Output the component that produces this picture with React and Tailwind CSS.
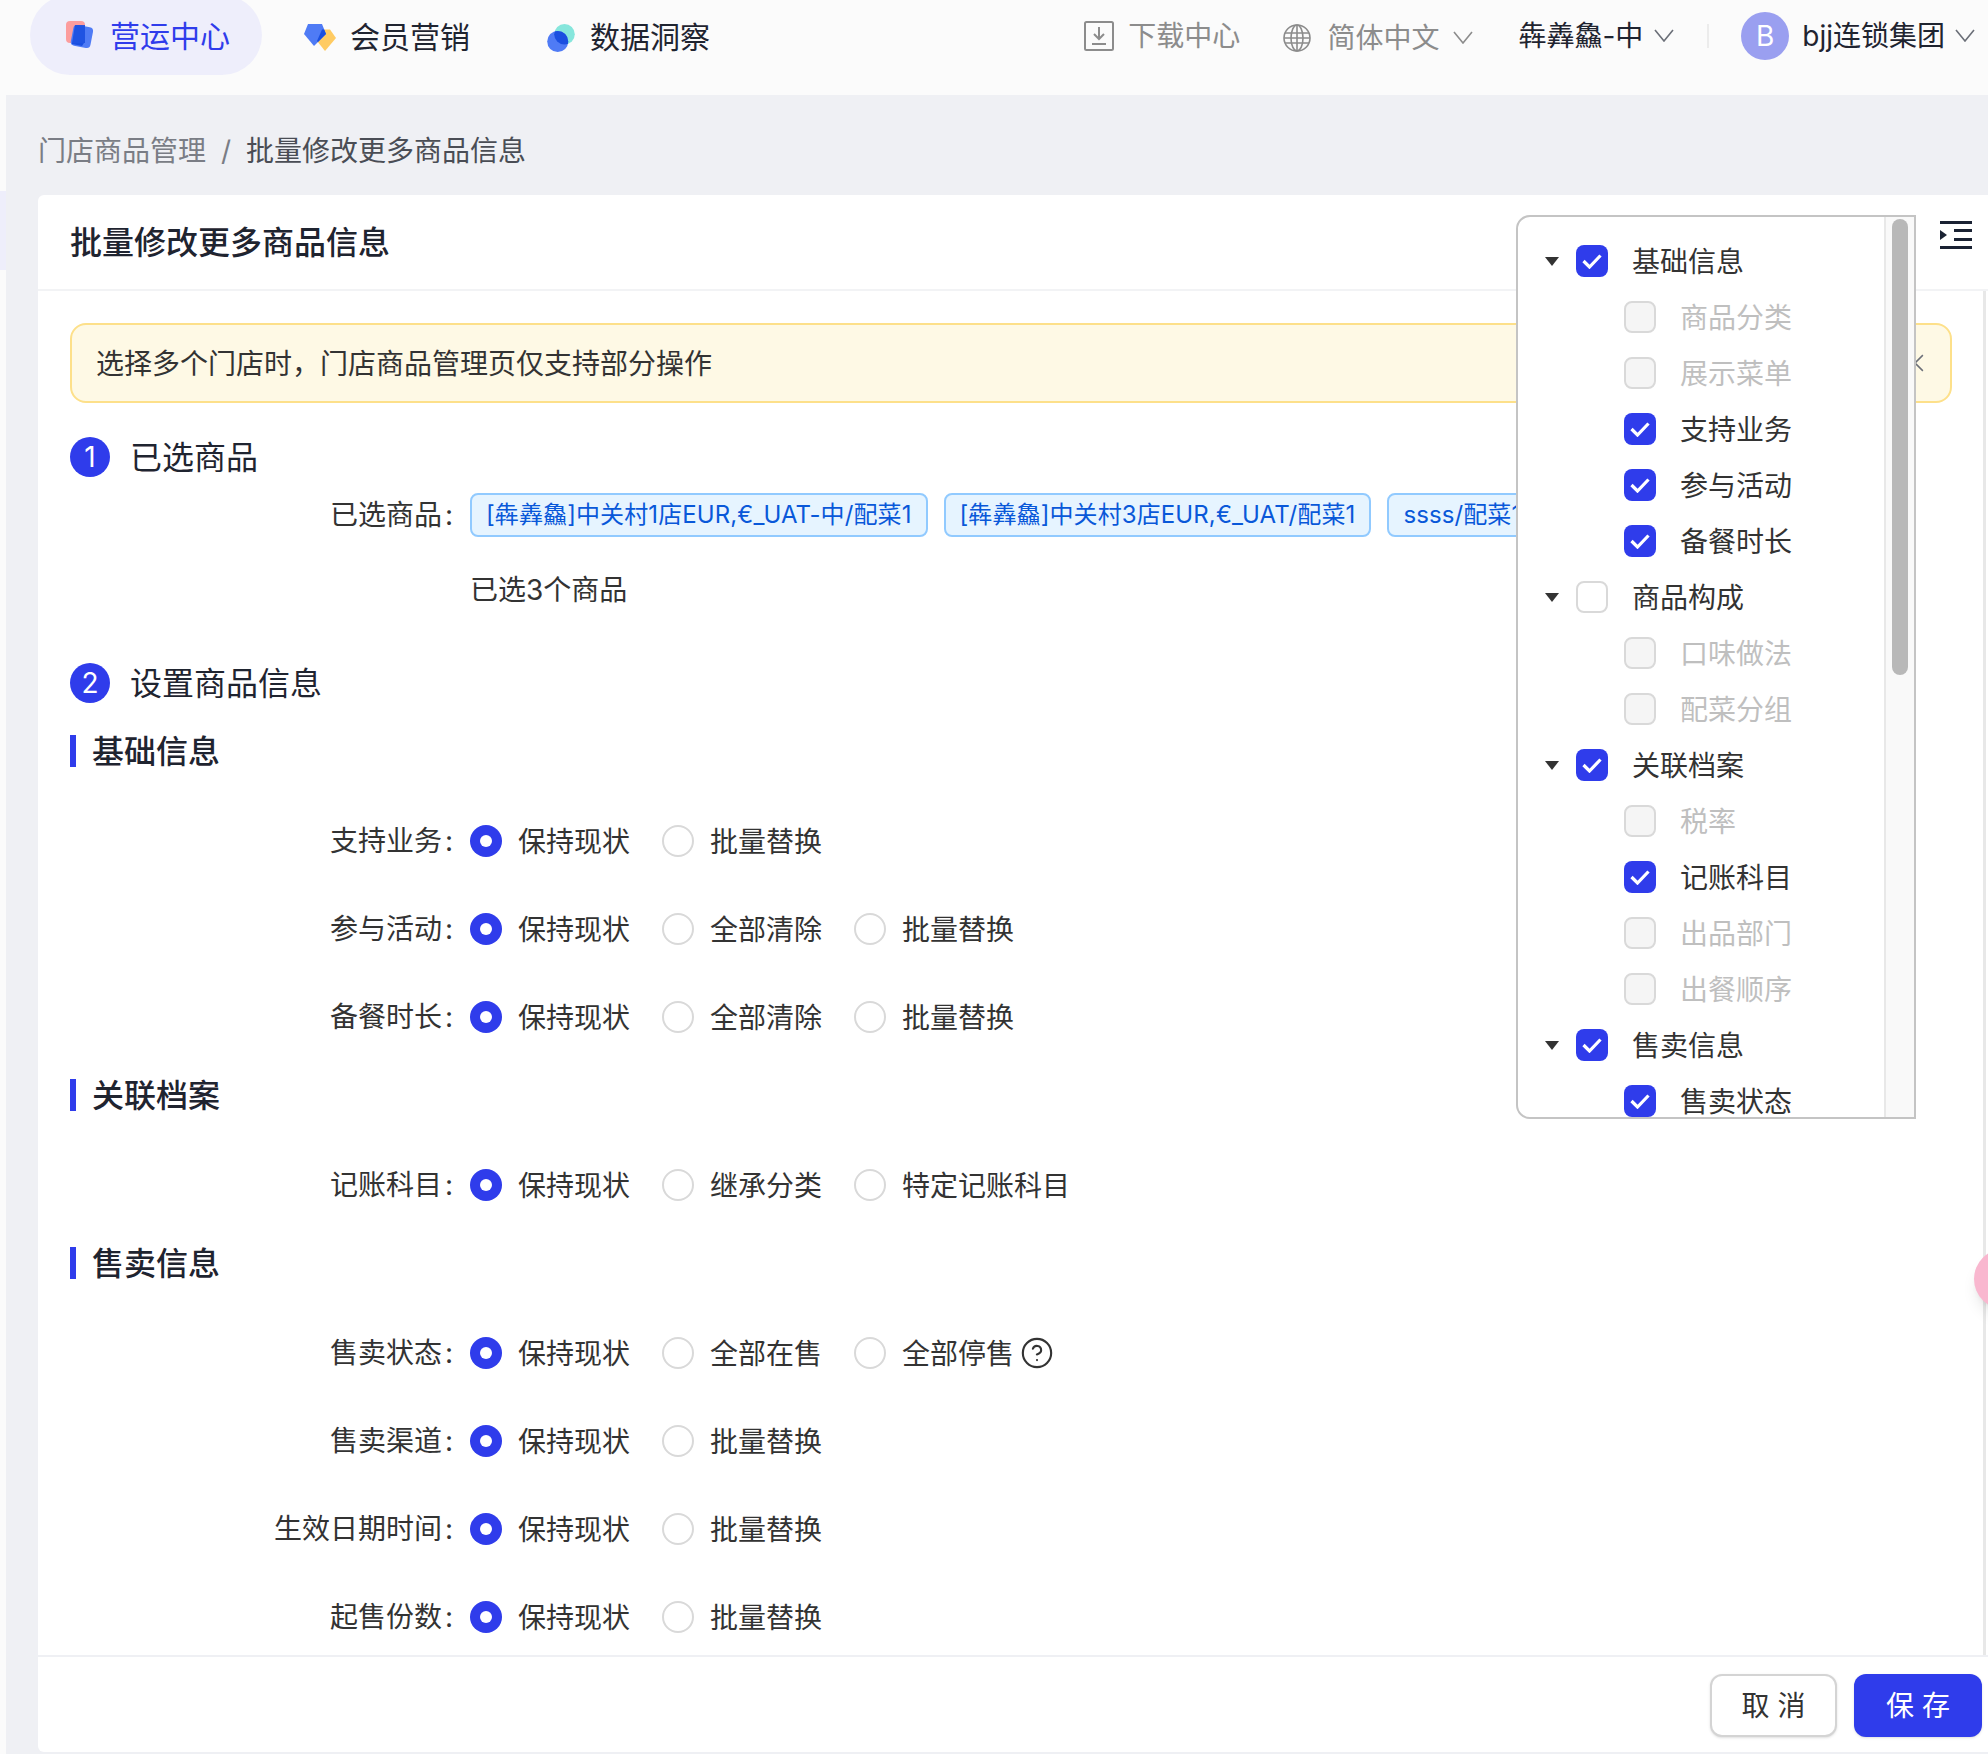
import React from 'react';
import { CircleHelp } from 'lucide-react';

const BLUE = 'bg-[#2f3ceb]';

const SECTIONS = [
  {
    title: '基础信息',
    rows: [
      { label: '支持业务', options: ['保持现状', '批量替换'] },
      { label: '参与活动', options: ['保持现状', '全部清除', '批量替换'] },
      { label: '备餐时长', options: ['保持现状', '全部清除', '批量替换'] },
    ],
  },
  {
    title: '关联档案',
    rows: [{ label: '记账科目', options: ['保持现状', '继承分类', '特定记账科目'] }],
  },
  {
    title: '售卖信息',
    rows: [
      { label: '售卖状态', options: ['保持现状', '全部在售', '全部停售'], help: true },
      { label: '售卖渠道', options: ['保持现状', '批量替换'] },
      { label: '生效日期时间', options: ['保持现状', '批量替换'] },
      { label: '起售份数', options: ['保持现状', '批量替换'] },
    ],
  },
];

const TREE = [
  { label: '基础信息', level: 1, state: 'checked' },
  { label: '商品分类', level: 2, state: 'disabled' },
  { label: '展示菜单', level: 2, state: 'disabled' },
  { label: '支持业务', level: 2, state: 'checked' },
  { label: '参与活动', level: 2, state: 'checked' },
  { label: '备餐时长', level: 2, state: 'checked' },
  { label: '商品构成', level: 1, state: 'empty' },
  { label: '口味做法', level: 2, state: 'disabled' },
  { label: '配菜分组', level: 2, state: 'disabled' },
  { label: '关联档案', level: 1, state: 'checked' },
  { label: '税率', level: 2, state: 'disabled' },
  { label: '记账科目', level: 2, state: 'checked' },
  { label: '出品部门', level: 2, state: 'disabled' },
  { label: '出餐顺序', level: 2, state: 'disabled' },
  { label: '售卖信息', level: 1, state: 'checked' },
  { label: '售卖状态', level: 2, state: 'checked' },
];

function Chevron({ className }) {
  return (
    <svg viewBox="0 0 20 13" className={className} fill="none" stroke="currentColor" strokeWidth="1.6">
      <polyline points="1,1 10,12 19,1" />
    </svg>
  );
}

function OpsIcon() {
  return (
    <svg viewBox="0 0 28 28" className="w-7 h-7 shrink-0">
      <rect x="0" y="0" width="19" height="22" rx="4" fill="#fc9d9d" />
      <rect x="6" y="5" width="20" height="21" rx="4" fill="#4f7bf5" transform="rotate(11 16 15)" />
      <path d="M9 4 L19 4 L19 22 L6 22 Z" fill="#1a4fe0" opacity="0.9" />
      <path d="M6 23 L16 25 L18 22 L6 22 Z" fill="#1a4fe0" />
    </svg>
  );
}

function MemberIcon() {
  return (
    <svg viewBox="0 0 32 28" className="w-8 h-7 shrink-0">
      <defs>
        <clipPath id="member-blue">
          <path d="M4 0 L18 0 L22 10 L10 22 L0 10 Z" />
        </clipPath>
      </defs>
      <path d="M18 5.5 L26 5.5 L32 14 L21 27 L13 17 Z" fill="#ffcb62" />
      <path d="M4 0 L18 0 L22 10 L10 22 L0 10 Z" fill="#4f7bf5" />
      <path d="M18 5.5 L26 5.5 L32 14 L21 27 L13 17 Z" fill="#1a4fe0" clipPath="url(#member-blue)" />
    </svg>
  );
}

function InsightIcon() {
  return (
    <svg viewBox="0 0 28 28" className="w-7 h-7 shrink-0">
      <defs>
        <clipPath id="insight-teal">
          <circle cx="17.5" cy="10.3" r="10.3" />
        </clipPath>
      </defs>
      <circle cx="17.5" cy="10.3" r="10.3" fill="#86e6dc" />
      <circle cx="10.7" cy="17.5" r="10.5" fill="#4f7bf5" />
      <circle cx="10.7" cy="17.5" r="10.5" fill="#1a4fe0" clipPath="url(#insight-teal)" />
    </svg>
  );
}

function TopBar() {
  return (
    <header className="h-[95px] shrink-0 bg-[#fbfbfb] flex items-start overflow-hidden">
      <div className="ml-[30px] -mt-[5px] w-[232px] h-[80px] rounded-[40px] bg-[#eeeefb] flex items-center pl-[36px] gap-4">
        <OpsIcon />
        <span className="text-[30px] leading-[40px] mt-[2px] text-[#2f3ceb]">营运中心</span>
      </div>
      <div className="ml-[42px] h-[75px] flex items-center gap-[14px] text-[#1f2430] text-[30px]">
        <MemberIcon />
        <span>会员营销</span>
      </div>
      <div className="ml-[77px] h-[75px] flex items-center gap-[15px] text-[#1f2430] text-[30px]">
        <InsightIcon />
        <span>数据洞察</span>
      </div>

      <div className="ml-auto h-[72px] flex items-center text-[28px]">
        <svg viewBox="0 0 30 30" className="w-[30px] h-[30px] text-[#8c8c8c]" fill="none" stroke="currentColor" strokeWidth="2">
          <rect x="1" y="1" width="28" height="28" rx="1.5" />
          <path d="M15 6 V17 M10 13 L15 18 L20 13 M8 23 H22" />
        </svg>
        <span className="ml-[14px] text-[#8c8c8c]">下载中心</span>
        <svg viewBox="0 0 28 28" className="ml-[43px] mt-[3px] w-7 h-7 text-[#8c8c8c]" fill="none" stroke="currentColor" strokeWidth="1.6">
          <circle cx="14" cy="14" r="13" />
          <ellipse cx="14" cy="14" rx="6" ry="13" />
          <path d="M14 1 V27 M2 9 H26 M1 14 H27 M2 19 H26" />
        </svg>
        <span className="ml-[16px] mt-[3px] text-[#8c8c8c]">简体中文</span>
        <Chevron className="ml-[14px] mt-[2px] w-5 h-[13px] text-[#8c8c8c]" />
        <span className="ml-[45px] text-[#1f2430]">犇羴鱻-中</span>
        <Chevron className="ml-[11px] -mt-[2px] w-5 h-[13px] text-[#6b6f78]" />
        <div className="ml-[33px] w-[2px] h-6 bg-[#ececec]" />
        <div className="ml-[32px] w-12 h-12 rounded-full bg-[#9a9ff0] text-white flex items-center justify-center">B</div>
        <span className="ml-[13px] text-[#1f2430]">bjj连锁集团</span>
        <Chevron className="ml-[10px] mr-[13px] -mt-[2px] w-5 h-[13px] text-[#6b6f78]" />
      </div>
    </header>
  );
}

function Tag({ children }) {
  return (
    <span className="h-11 shrink-0 flex items-center px-[14px] rounded-lg border-2 border-[#91caff] bg-[#e6f4ff] text-[#0958d9] text-[24px] tracking-[0.1px] whitespace-nowrap">
      {children}
    </span>
  );
}

function Step({ n, title, className }) {
  return (
    <div className={`flex items-center h-10 ${className || ''}`}>
      <span className={`w-10 h-10 rounded-full ${BLUE} text-white text-[28px] flex items-center justify-center`}>{n}</span>
      <span className="ml-5 mt-[1px] text-[32px] text-[#1f2430]">{title}</span>
    </div>
  );
}

function Radio({ checked }) {
  if (checked) {
    return (
      <span className={`w-8 h-8 rounded-full ${BLUE} flex items-center justify-center`}>
        <span className="w-3 h-3 rounded-full bg-white" />
      </span>
    );
  }
  return <span className="w-8 h-8 rounded-full border-2 border-[#d9d9d9] bg-white" />;
}

function Label({ text }) {
  return (
    <div className="w-[432px] shrink-0 flex justify-end items-center text-[28px] text-[#333] pr-[19px]">
      {text}
      <span className="ml-[3px] w-[6px]">:</span>
    </div>
  );
}

function FormRow({ row }) {
  return (
    <div className="flex items-center h-8 mt-[56px] first:mt-[58px]">
      <Label text={row.label} />
      <div className="flex items-center gap-8">
        {row.options.map((opt, i) => (
          <div key={opt} className="flex items-center">
            <Radio checked={i === 0} />
            <span className="ml-4 mt-[1px] text-[28px] text-[#333]">{opt}</span>
            {row.help && i === row.options.length - 1 && (
              <CircleHelp className="ml-[6px] w-[34px] h-[34px] text-[#333]" strokeWidth={1.5} />
            )}
          </div>
        ))}
      </div>
    </div>
  );
}

function Section({ section, first }) {
  return (
    <section className={first ? 'mt-8' : 'mt-[46px]'}>
      <div className="flex items-center h-8 pl-8">
        <span className={`w-[6px] h-8 ${BLUE}`} />
        <span className="ml-4 mt-[1px] text-[32px] font-medium text-[#1f2430]">{section.title}</span>
      </div>
      <div>
        {section.rows.map((row) => (
          <FormRow key={row.label} row={row} />
        ))}
      </div>
    </section>
  );
}

function TreeCheck({ state }) {
  if (state === 'checked') {
    return (
      <span className={`w-8 h-8 rounded-lg ${BLUE} flex items-center justify-center shrink-0`}>
        <svg viewBox="0 0 20 16" className="w-5 h-4" fill="none" stroke="#fff" strokeWidth="3.2">
          <path d="M1.5 8 L7.5 14 L18.5 2.5" />
        </svg>
      </span>
    );
  }
  return (
    <span className={`w-8 h-8 rounded-lg border-2 border-[#d9d9d9] shrink-0 ${state === 'disabled' ? 'bg-[#f5f5f5]' : 'bg-white'}`} />
  );
}

function TreeDropdown() {
  return (
    <div className="absolute left-[1516px] top-[215px] w-[400px] h-[904px] bg-white border-2 border-[#c4c4c4] rounded-tl-[14px] rounded-bl-[14px] overflow-hidden flex z-10">
      <div className="flex-1 pt-4 overflow-hidden">
        {TREE.map((node) => (
          <div key={node.label} className={`h-14 flex items-center ${node.level === 1 ? 'pl-[27px]' : 'pl-[106px]'}`}>
            {node.level === 1 && (
              <svg viewBox="0 0 14 9" className="w-[14px] h-[9px] mr-[17px] text-[#333]" fill="currentColor">
                <polygon points="0,0 14,0 7,9" />
              </svg>
            )}
            <TreeCheck state={node.state} />
            <span className={`ml-6 mt-[2px] text-[28px] ${node.state === 'disabled' ? 'text-[#bfbfbf]' : 'text-[#333]'}`}>{node.label}</span>
          </div>
        ))}
      </div>
      <div className="w-[30px] shrink-0 bg-[#f9f9f9] border-l-2 border-[#e8e8e8] pl-[6px] pt-[2px]">
        <div className="w-4 h-[456px] rounded-lg bg-[#b8b8b8]" />
      </div>
    </div>
  );
}

export default function App() {
  return (
    <div className="relative w-[1988px] h-[1754px] overflow-hidden bg-[#fbfbfb] font-[Inter,'Noto_Sans_CJK_SC',sans-serif] flex flex-col">
      <TopBar />
      <div className="flex-1 min-h-0 ml-[6px] bg-[#eff0f4] flex flex-col">
        <div className="h-[100px] shrink-0 pl-8 pt-[11px] flex items-center gap-[15px] text-[28px]">
          <span className="text-[#7a7d85]">门店商品管理</span>
          <span className="text-[#7a7d85]">/</span>
          <span className="text-[#4a4d55]">批量修改更多商品信息</span>
        </div>

        <main className="ml-8 h-[1557px] bg-white rounded-tl-md rounded-bl-md flex flex-col overflow-hidden">
          <div className="h-[96px] shrink-0 border-b-2 border-[#f2f3f5] flex items-center pl-8 pt-[2px]">
            <h1 className="text-[32px] font-medium text-[#1f2430]">批量修改更多商品信息</h1>
          </div>

          <div className="flex-1 min-h-0 mr-[2px] border-r-[3px] border-[#e8e8e8] overflow-hidden">
            <div className="mt-8 ml-8 mr-[31px] h-20 rounded-2xl border-2 border-[#fde08a] bg-[#fef9e5] flex items-center pl-6 pr-[26px] justify-between">
              <span className="text-[28px] text-[#333] mt-[2px]">选择多个门店时，门店商品管理页仅支持部分操作</span>
              <svg viewBox="0 0 16 16" className="w-[18px] h-[18px] text-[#6b6f78]" fill="none" stroke="currentColor" strokeWidth="1.3">
                <path d="M1 1 L15 15 M15 1 L1 15" />
              </svg>
            </div>

            <Step n="1" title="已选商品" className="mt-[34px] ml-8" />

            <div className="mt-4 flex items-center h-11">
              <Label text="已选商品" />
              <div className="flex gap-4">
                <Tag>[犇羴鱻]中关村1店EUR,€_UAT-中/配菜1</Tag>
                <Tag>[犇羴鱻]中关村3店EUR,€_UAT/配菜1</Tag>
                <Tag>ssss/配菜1</Tag>
              </div>
            </div>
            <div className="mt-[31px] ml-[432px] h-11 flex items-center text-[28px] text-[#333]">已选3个商品</div>

            <Step n="2" title="设置商品信息" className="mt-[51px] ml-8" />

            {SECTIONS.map((section, i) => (
              <Section key={section.title} section={section} first={i === 0} />
            ))}
          </div>

          <footer className="h-[97px] shrink-0 border-t-2 border-[#eff0f4] flex items-start justify-end gap-[17px] pt-[17px] pr-[6px]">
            <button className="w-[127px] h-[63px] rounded-xl border-2 border-[#d4d4d4] bg-white text-[28px] text-[#333] shadow-sm">取 消</button>
            <button className={`w-[128px] h-[63px] rounded-xl ${BLUE} text-[28px] text-white shadow-sm`}>保 存</button>
          </footer>
        </main>
      </div>

      <TreeDropdown />

      {/* indent toggle beside the dropdown */}
      <svg viewBox="0 0 32 28" className="absolute left-[1940px] top-[221px] w-8 h-7 z-10 text-[#1a2233]" fill="currentColor">
        <rect x="0" y="0" width="32" height="3" />
        <rect x="14" y="8" width="18" height="3" />
        <rect x="14" y="17" width="18" height="3" />
        <rect x="0" y="25" width="32" height="3" />
        <polygon points="0,9 7,14 0,19" />
      </svg>

      <div className="absolute left-0 top-[191px] w-[6px] h-[79px] bg-[#eeeefb]" />
      <div className="absolute left-[1974px] top-[1249px] w-[60px] h-[60px] rounded-full bg-[#f9b7cf] shadow-lg" />
    </div>
  );
}
